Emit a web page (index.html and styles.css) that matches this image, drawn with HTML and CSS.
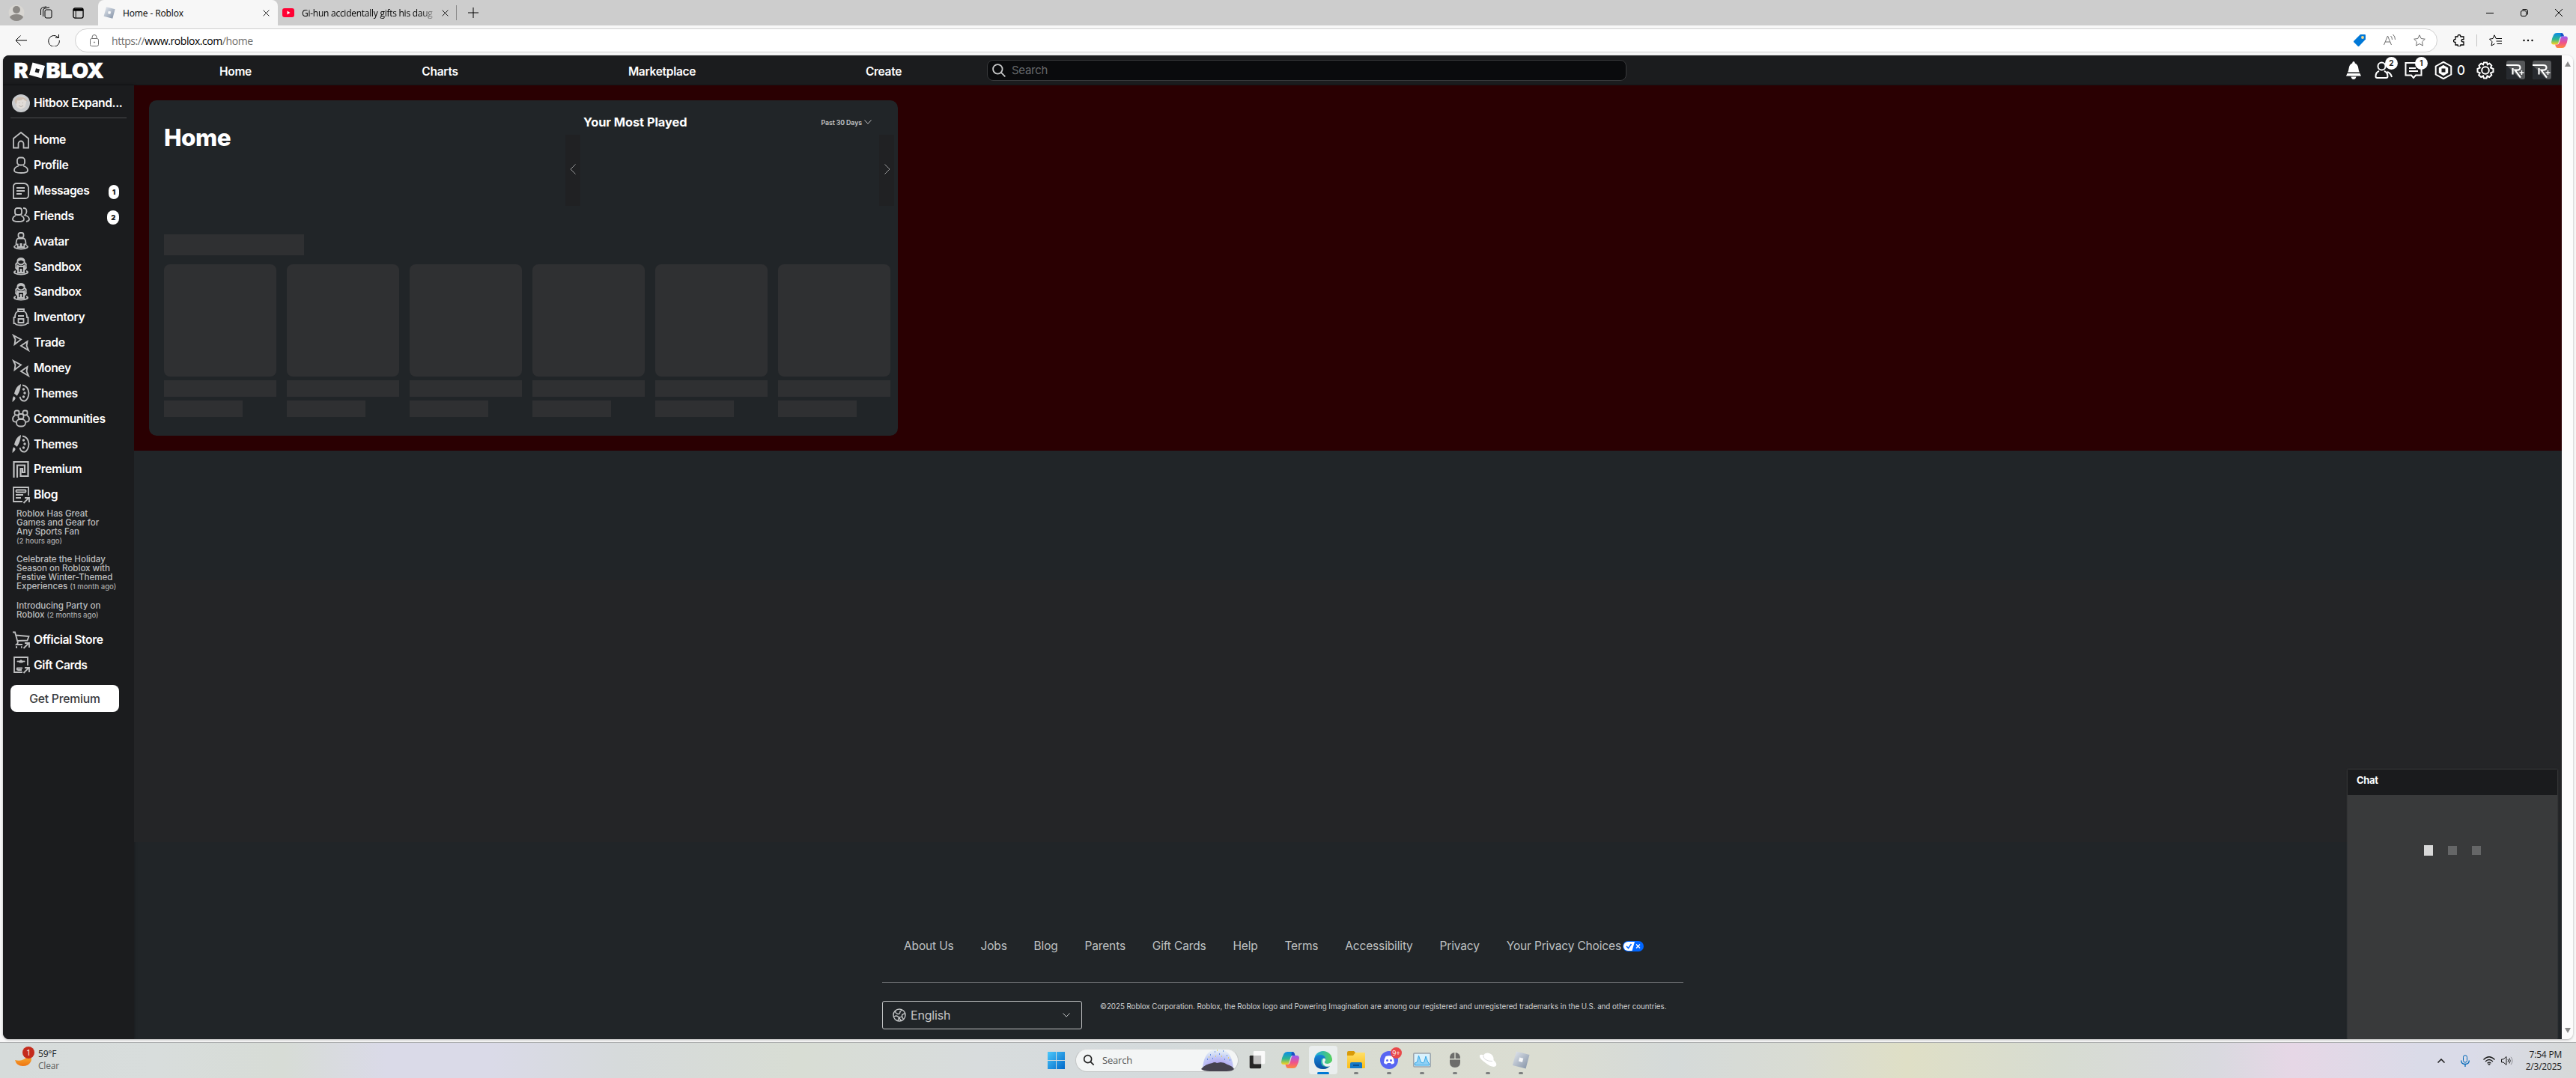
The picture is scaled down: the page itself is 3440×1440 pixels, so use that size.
FILE: index.html
```html
<!DOCTYPE html>
<html lang="en">
<head>
    <meta charset="UTF-8">
    <meta name="viewport" content="width=device-width, initial-scale=1.0">
    <title>Home - Roblox</title>
    <link rel="stylesheet" href="styles.css">
</head>
<body>
    <!-- Shared icons -->
    <svg width="0" height="0" class="defs">
        <defs>
            <linearGradient id="gSteel" x1="0" y1="0" x2="1" y2="1"><stop offset="0" stop-color="#e6eaf0"/><stop offset="1" stop-color="#7f8ea3"/></linearGradient>
            <linearGradient id="gWin" x1="0" y1="0" x2="1" y2="1"><stop offset="0" stop-color="#4cc8fb"/><stop offset="1" stop-color="#0068c9"/></linearGradient>
            <linearGradient id="gCopA" x1="0" y1="0" x2="0" y2="1"><stop offset="0" stop-color="#0a8be8"/><stop offset=".55" stop-color="#2fb78f"/><stop offset="1" stop-color="#ffd21c"/></linearGradient>
            <linearGradient id="gCopB" x1="0" y1="0" x2="0" y2="1"><stop offset="0" stop-color="#9a5df5"/><stop offset=".55" stop-color="#f0538a"/><stop offset="1" stop-color="#ff8a3c"/></linearGradient>
            <linearGradient id="gEdge" x1="0" y1="0" x2="1" y2="0"><stop offset="0" stop-color="#18a4e6"/><stop offset="1" stop-color="#58d35c"/></linearGradient>
            <linearGradient id="gEdge2" x1="0" y1="0" x2="0" y2="1"><stop offset="0" stop-color="#1684d8"/><stop offset="1" stop-color="#0c4fa0"/></linearGradient>
            <linearGradient id="gMoon" x1="0" y1="0" x2="0" y2="1"><stop offset="0" stop-color="#f8bb3c"/><stop offset="1" stop-color="#ef7512"/></linearGradient>
            <linearGradient id="gFolder" x1="0" y1="0" x2="0" y2="1"><stop offset="0" stop-color="#ffdf68"/><stop offset="1" stop-color="#fbbd17"/></linearGradient>
            <radialGradient id="gBurst" cx=".5" cy="1" r="1"><stop offset="0" stop-color="#a98df0"/><stop offset=".6" stop-color="#c3ccf6"/><stop offset="1" stop-color="#dfeef6" stop-opacity=".4"/></radialGradient>
        </defs>
        <symbol id="i-home" viewBox="0 0 24 24"><path d="M2 22.500V10L12 2l10 8v12.500h-6.500V17a3.500 3.500 0 0 0-7 0v5.500z"/></symbol>
        <symbol id="i-profile" viewBox="0 0 24 24"><rect x="7" y="1.500" width="10" height="10" rx="3.500"/><path d="M9 12.500c-3.500 1-6 3-6 6 0 2.500 3 3.500 9 3.500s9-1 9-3.500c0-3-2.500-5-6-6"/></symbol>
        <symbol id="i-messages" viewBox="0 0 24 24"><path d="M2 22V6a4 4 0 0 1 4-4h10a6 6 0 0 1 6 6v10a4 4 0 0 1-4 4zM6 8h11M6 12h11M6 16h7"/></symbol>
        <symbol id="i-friends" viewBox="0 0 24 24"><rect x="4" y="2" width="9" height="9" rx="3"/><path d="M5 12c-2.500 1-4 3-4 5 0 2 3 3 7.500 3s7.500-1 7.500-3-1.500-4-4-5M15 2c3.500 0 4.500 1 4.500 4.500S18 10.500 17 11.500c4 1 6 3 6 5.500 0 1.500-1.500 2.500-4 3"/></symbol>
        <symbol id="i-avatar" viewBox="0 0 24 24"><rect x="8.500" y="1" width="7" height="6.500" rx="2.500"/><path d="M8 8.500h8q2.500 1 2.500 8h-2.200V20H12.600v-4h-1.200v4H7.700v-3.500H5.500q0-7 2.500-8zM5 18c-5 2 0 4.500 7 4.500s12-2.500 7-4.500"/></symbol>
        <symbol id="i-sandbox" viewBox="0 0 24 24"><path d="M7.500 7q-1-6 4.500-6t4.500 6q-2 2.500-4.500 2.500T7.500 7zM8 4l4-1.500L16 4M7.500 7q-3 1-2 4l-.3 3 1.800 2 1-5M16.500 7q3 1 2 4l.3 3-1.800 2-1-5M8 11l1.500 1h5l1.500-1v9h-3.500v-4h-1v4H8zM5 18c-5 2 0 4.500 7 4.500s12-2.500 7-4.500" stroke-width="2"/></symbol>
        <symbol id="i-inventory" viewBox="0 0 24 24"><path d="M8 4V1h8v3M8 4h8q4 1 4 8h1.500v8H20q-1 2.500-8 2.500T4 20H2.500v-8H4q0-7 4-8zM8 10h8M8.500 14h7v5h-7z"/></symbol>
        <symbol id="i-trade" viewBox="0 0 24 24"><path d="M2 2l10 5.500L3.500 14l1-6.500zM22 22l-10-6 8.500-6-1 6z" stroke-width="1.900"/></symbol>
        <symbol id="i-themes" viewBox="0 0 24 24"><path d="M11 1.500q-1 8-4.500 13l-2.500-2Q6 4 11 1.500z" fill="currentColor"/><path d="M2.500 17.500q2 1 .5 3L1.500 22q0-3 1-4.500z" fill="currentColor"/><path d="M14 1.500q8 1.500 8.500 10.500-.5 8-5 10.500-5.500 1-7-5.500"/><circle cx="15.500" cy="7" r=".8"/><circle cx="17" cy="12" r=".8"/><circle cx="15.500" cy="17" r=".8"/></symbol>
        <symbol id="i-communities" viewBox="0 0 24 24"><rect x="3.500" y="1.500" width="6" height="6" rx="2"/><rect x="14.500" y="1.500" width="6" height="6" rx="2"/><rect x="8.500" y="6" width="7" height="6.500" rx="2.500"/><rect x="6" y="13" width="12" height="9.500" rx="4.500"/><path d="M4 8Q0 10 1.500 15q1.500 2 4 1.500M20 8q4 2 2.500 7-1.500 2-4 1.500"/></symbol>
        <symbol id="i-premium" viewBox="0 0 24 24"><path d="M2.500 23V2h19v19h-10V11h2.500v5h3V6.500H7V23" stroke-width="2.200"/></symbol>
        <symbol id="i-blog" viewBox="0 0 24 24"><path d="M14 21H2V2h20v11"/><rect x="5.500" y="5.500" width="13" height="3" rx="1"/><path d="M5 12h10M5 16h7M15.500 23l7-7M17 16h6v6"/></symbol>
        <symbol id="i-store" viewBox="0 0 24 24"><path d="M1 1.500h3L8 16M5 5.500l17.500 1.500-2 5.500L7 13M8 16l-2 2h8M15.500 23l7-7M17 16h6v6"/><path d="M5 21.500h2M12 21.500h1.500" stroke-width="2.500"/></symbol>
        <symbol id="i-gift" viewBox="0 0 24 24"><path d="M14 22H3V2h18v11M14 16.500H7q-1 2 1 2.500h5M15.500 23l7-7M17 16h6v6"/><path d="M7 7h3l2-1.500L14 7h3v1h-2l-1 1h-4L9 8H7z" fill="currentColor" stroke-width=".8"/></symbol>
        <symbol id="i-search" viewBox="0 0 24 24"><circle cx="10" cy="10" r="7.500"/><path d="M15.500 15.500L22 22"/></symbol>
        <symbol id="i-close" viewBox="0 0 10 10"><path d="M.7.700l8.600 8.600M9.300.700L.7 9.300"/></symbol>
        <symbol id="i-roblox" viewBox="0 0 24 24"><path d="M6 .5L23.500 5 18.500 23.500.800 19z" fill="url(#gSteel)"/><path d="M10.300 8.500l5 1.300-1.400 5.100-5-1.300z" fill="#fff" opacity=".9"/></symbol>
        <symbol id="i-copilot" viewBox="0 0 24 22"><path d="M8 0h7q2 0 2.500 2l1 3h-3q-2.500 0-3.300 3l-2 7q-.7 2-2.700 2H3q-3 0-3-3.500Q.5 8 3.500 2.500 5 0 8 0z" fill="url(#gCopA)"/><path d="M14 .2h1q2 0 2.500 1.800l1 3h-5z" fill="#1c4fc4"/><path d="M16 22H9q-2 0-2.500-2l-1-3h3q2.500 0 3.300-3l2-7q.700-2 2.700-2H21q3 0 3 3.500-.5 5.500-3.500 11Q19 22 16 22z" fill="url(#gCopB)"/></symbol>
        <symbol id="i-rplus" viewBox="0 0 25 25"><rect width="25" height="25" rx="3" fill="#555759"/><path d="M0 6l19 19H3q-3 0-3-3z" fill="#272a2f"/><path d="M0 6h14q4.500 0 4.500 3.300T14 12.700h-2.500l7.500 10M8.500 10v8.500" stroke="#fff" stroke-width="2.200" fill="none"/><path d="M20.500 13v6M17.500 16h6" stroke="#fff" stroke-width="1.400"/></symbol>
    </svg>

    <!-- Browser chrome -->
    <div class="tabstrip">
        <div class="tab-tools">
            <svg class="user" viewBox="0 0 22 22"><circle cx="11" cy="11" r="10.500" fill="#d8d6d2"/><circle cx="11" cy="7" r="5" fill="#8b8884"/><path d="M2 17q2-4 9-4t9 4q-3 5-9 5t-9-5z" fill="#8b8884"/></svg>
            <svg class="ws line" viewBox="0 0 18 18"><rect x="7" y="5" width="9" height="11" rx="2"/><path d="M4.500 14V6q0-2.500 2.500-3l6-1M1.500 12V5q0-2 2-2.700L9 .8"/></svg>
            <svg class="ta" viewBox="0 0 16 16"><rect x="1" y="1" width="14" height="14" rx="2.500" fill="none" stroke="#000" stroke-width="1.400"/><path d="M1 1.500h14v3.500H1z"/><path d="M4.500 4v11" stroke="#000"/></svg>
        </div>
        <div class="tab active">
            <svg class="fav"><use href="#i-roblox"/></svg>
            <span class="tab-title">Home - Roblox</span>
            <svg class="x line"><use href="#i-close"/></svg>
        </div>
        <div class="tab">
            <svg class="fav" viewBox="0 0 16 16"><rect y="2" width="16" height="12" rx="3" fill="#ff0033"/><path d="M6.500 5.500v5l4-2.500z" fill="#fff"/></svg>
            <span class="tab-title fade">Gi-hun accidentally gifts his daug</span>
            <svg class="x line"><use href="#i-close"/></svg>
        </div>
        <svg class="plus line" viewBox="0 0 14 14"><path d="M7 0v14M0 7h14"/></svg>
        <div class="win-btns">
            <svg class="line" viewBox="0 0 10 10"><path d="M0 5.500h10"/></svg>
            <svg class="line" viewBox="0 0 10 10"><rect x=".5" y="2.500" width="7" height="7" rx="1.500"/><path d="M2.500.500H7q2.500 0 2.500 2.500v4.500"/></svg>
            <svg class="line" viewBox="0 0 10 10"><path d="M0 0l10 10M10 0L0 10"/></svg>
        </div>
    </div>

    <div class="toolbar">
        <svg class="back line" viewBox="0 0 16 14"><path d="M16 7H1M7.500.500L1 7l6.500 6.500"/></svg>
        <svg class="reload line" viewBox="0 0 16 16"><path d="M13.500 4A7.300 7.300 0 1 0 15.300 8M14.500 0v4.500H10"/></svg>
        <div class="address">
            <svg class="lock line" viewBox="0 0 14 16"><rect x="1.500" y="5.500" width="11" height="10" rx="2"/><path d="M4 5.500V4q0-3.500 3-3.500t3 3.500v1.500"/><circle cx="7" cy="10.500" r=".6"/></svg>
            <span class="url">https://<b>www.roblox.com</b>/home</span>
            <svg class="tag" viewBox="0 0 16 16"><path d="M9 0h6q1 0 1 1v5.500L7.500 15.500q-1 1-2 0L.5 10.500q-1-1 0-2z" fill="#0078d7"/><circle cx="12" cy="4" r="1.900" fill="#f9d98c"/></svg>
            <svg class="aa line" viewBox="0 0 16 16"><path d="M.5 14L5.500 2l5 12M2.200 10h6.600M9.500 2q2 1.500 2 5M12.500 0q3 2.500 3 7"/></svg>
            <svg class="star line" viewBox="0 0 16 16"><path d="M8 .8l2.200 4.700 5.100.700-3.700 3.600.9 5.200L8 12.500 3.500 15l.9-5.200L.7 6.200l5.100-.7z"/></svg>
        </div>
        <svg class="ext line" viewBox="0 0 16 16"><path d="M3 3h3q0-2.500 2-2.500T10 3h4v3.500q-3 0-3 1.800t3 1.700V14h-4q0 2-2 2t-2-2H3v-3.500q-2.500 0-2.500-2T3 6.500z" stroke-width="1.300"/></svg>
        <i class="sep"></i>
        <svg class="favs line" viewBox="0 0 17 16"><path d="M11 5.700l-1.800-.2L7 .8 5 5.500l-4.500.700L4 9.800 3 15l4.500-2.500M11 5.500h6M9.500 9H17M10.500 12.500H17"/></svg>
        <svg class="dots" viewBox="0 0 14 4"><circle cx="1.500" cy="2" r="1.200"/><circle cx="7" cy="2" r="1.200"/><circle cx="12.500" cy="2" r="1.200"/></svg>
        <svg class="cop"><use href="#i-copilot"/></svg>
    </div>

    <!-- Page -->
    <div class="viewport">
        <div class="page">
            <header class="topbar">
                <svg class="logo" viewBox="0 0 118 22">
                    <text x="-1.500" y="20.500" textLength="19" lengthAdjust="spacingAndGlyphs">R</text>
                    <path d="M23.500.5L40 5 35.500 21.500 19 17z"/><path d="M28 8.200l5 1.300-1.300 5-5-1.300z" fill="#1b1c1e"/>
                    <text x="41.500" y="20.500" textLength="77" lengthAdjust="spacingAndGlyphs">BLOX</text>
                </svg>
                <nav class="topnav"><a>Home</a><a>Charts</a><a>Marketplace</a><a>Create</a></nav>
                <div class="search"><svg class="line"><use href="#i-search"/></svg>Search</div>
                <div class="top-icons">
                    <div class="ti"><svg viewBox="0 0 24 24"><path d="M12 0q1.800 0 1.800 2.500Q18 4 18.500 10q.3 3 1.500 4.500H4Q5.200 13 5.500 10 6 4 10.200 2.500 10.200 0 12 0zM3.500 16h17l1.500 3.500H2zM8.500 20.500h7q-1 3.500-3.500 3.500t-3.500-3.500z" fill="#fff"/></svg></div>
                    <div class="ti"><svg class="line" viewBox="0 0 24 24"><circle cx="9.500" cy="6.500" r="5"/><path d="M6 13q-4.500 1.500-4.500 7 0 2 2 2h12q2 0 2-2 0-5.500-4.500-7M17 14q5 2 6 7"/></svg><b class="bub">2</b></div>
                    <div class="ti"><svg class="line" viewBox="0 0 24 24"><path d="M15 2H1.500v16.500H9l3 3.500 3-3.500h7.500V9M6 9h9M6 13h12"/></svg><b class="bub">1</b></div>
                    <div class="ti"><svg class="line" viewBox="0 0 24 24"><path d="M12 .8l10.300 5.700v11L12 23.200 1.700 17.500v-11z"/><path d="M12 6l5.200 3v6L12 18l-5.200-3V9z" fill="#fff"/><path d="M9.500 9.500h5v5h-5z" fill="#1b1c1e" stroke="none"/></svg></div>
                    <span class="robux">0</span>
                    <div class="ti gear"><svg class="line" viewBox="0 0 24 24"><path d="M10 1.500h4l.8 2.700 2.700-1.500L20.300 5.500 19 8.500l3.500 1.500v4L19 15.500l1.300 2.700-3 2.800-2.800-1.500-1 3H10l-1-3-2.800 1.500-3-2.800L4.700 15.500 1.500 14v-4l3.200-1.500L3.500 5.500l2.800-2.800L9 4.200z"/><circle cx="12" cy="12" r="4.800"/></svg></div>
                    <svg class="rp"><use href="#i-rplus"/></svg>
                    <svg class="rp"><use href="#i-rplus"/></svg>
                </div>
            </header>

            <div class="body">
                <aside class="sidebar">
                    <div class="me">
                        <svg viewBox="0 0 24 24"><circle cx="12" cy="12" r="12" fill="#c9cbcd"/><path d="M5 11q0-8 7.500-8T19 11l-1.500 6-5.500 3-5.500-3z" fill="#e0dcd8"/><path d="M3.500 9Q5 3 12 3.500t8.500 6Q17 9 15 6q-3 3-8 2l-1 5q-2-1-2.500-4z" fill="#cdbfb2"/><path d="M9 15q3 3 6 0M9.500 11v1M14.500 11v1" stroke="#b4aca6" fill="none"/></svg>
                        <span>Hitbox Expand...</span>
                    </div>
                    <ul class="menu">
                        <li><svg><use href="#i-home"/></svg>Home</li>
                        <li><svg><use href="#i-profile"/></svg>Profile</li>
                        <li><svg><use href="#i-messages"/></svg>Messages<b class="count one">1</b></li>
                        <li><svg><use href="#i-friends"/></svg>Friends<b class="count">2</b></li>
                        <li><svg><use href="#i-avatar"/></svg>Avatar</li>
                        <li><svg><use href="#i-sandbox"/></svg>Sandbox</li>
                        <li><svg><use href="#i-sandbox"/></svg>Sandbox</li>
                        <li><svg><use href="#i-inventory"/></svg>Inventory</li>
                        <li><svg><use href="#i-trade"/></svg>Trade</li>
                        <li><svg><use href="#i-trade"/></svg>Money</li>
                        <li><svg><use href="#i-themes"/></svg>Themes</li>
                        <li><svg><use href="#i-communities"/></svg>Communities</li>
                        <li><svg><use href="#i-themes"/></svg>Themes</li>
                        <li><svg><use href="#i-premium"/></svg>Premium</li>
                        <li><svg><use href="#i-blog"/></svg>Blog</li>
                    </ul>
                    <div class="news">
                        <p>Roblox Has Great<br>Games and Gear for<br>Any Sports Fan<br><small>(2 hours ago)</small></p>
                        <p>Celebrate the Holiday<br>Season on Roblox with<br>Festive Winter-Themed<br>Experiences <small>(1 month ago)</small></p>
                        <p>Introducing Party on<br>Roblox <small>(2 months ago)</small></p>
                    </div>
                    <ul class="menu">
                        <li><svg><use href="#i-store"/></svg>Official Store</li>
                        <li><svg><use href="#i-gift"/></svg>Gift Cards</li>
                    </ul>
                    <button class="premium-btn">Get Premium</button>
                </aside>

                <main class="content">
                    <section class="banner">
                        <div class="card">
                            <div class="card-top">
                                <h1>Home</h1>
                                <div class="most">
                                    <div class="most-head">
                                        <h2>Your Most Played</h2>
                                        <span class="range">Past 30 Days <svg class="line" viewBox="0 0 10 6"><path d="M.5.500L5 5.200 9.500.500"/></svg></span>
                                    </div>
                                    <div class="arrows">
                                        <span><svg class="line" viewBox="0 0 8 14"><path d="M7.500.500L1 7l6.500 6.500"/></svg></span>
                                        <span class="next"><svg class="line" viewBox="0 0 8 14"><path d="M.5.500L7 7 .5 13.500"/></svg></span>
                                    </div>
                                </div>
                            </div>
                            <div class="shim title"></div>
                            <div class="tiles">
                                <div class="tile"><div class="shim pic"></div><div class="shim l1"></div><div class="shim l2"></div></div>
                                <div class="tile"><div class="shim pic"></div><div class="shim l1"></div><div class="shim l2"></div></div>
                                <div class="tile"><div class="shim pic"></div><div class="shim l1"></div><div class="shim l2"></div></div>
                                <div class="tile"><div class="shim pic"></div><div class="shim l1"></div><div class="shim l2"></div></div>
                                <div class="tile"><div class="shim pic"></div><div class="shim l1"></div><div class="shim l2"></div></div>
                                <div class="tile"><div class="shim pic"></div><div class="shim l1"></div><div class="shim l2"></div></div>
                            </div>
                        </div>
                    </section>
                    <div class="filler"></div>
                    <footer class="footer">
                        <div class="links">
                            <a>About Us</a><a>Jobs</a><a>Blog</a><a>Parents</a><a>Gift Cards</a><a>Help</a><a>Terms</a><a>Accessibility</a><a>Privacy</a>
                            <a>Your Privacy Choices<svg viewBox="0 0 28 14"><rect width="28" height="14" rx="7" fill="#0066ff"/><path d="M7 1h9l-3.500 12H7A6 6 0 0 1 7 1z" fill="#fff"/><path d="M5 7l2.500 2.500L11.500 4" stroke="#0066ff" stroke-width="1.500" fill="none"/><path d="M18 4.500l5 5M23 4.500l-5 5" stroke="#fff" stroke-width="1.400"/></svg></a>
                        </div>
                        <div class="legal">
                            <div class="lang">
                                <svg class="line globe" viewBox="0 0 18 18"><circle cx="9" cy="9" r="8"/><path d="M3.500 3.500Q4 7 7 7.500T10 4l3-2M16.500 7q-4 .5-4 3t2 4M2 11q3-2 5 0t5 0M7 16.500l1.500-4 3 4"/></svg>
                                English
                                <svg class="line chev" viewBox="0 0 10 6"><path d="M.5.500L5 5.200 9.500.500"/></svg>
                            </div>
                            <p>©2025 Roblox Corporation. Roblox, the Roblox logo and Powering Imagination are among our registered and unregistered trademarks in the U.S. and other countries.</p>
                        </div>
                    </footer>
                </main>
            </div>

            <div class="chat">
                <div class="chat-head">Chat</div>
                <div class="loader"><i class="on"></i><i></i><i></i></div>
            </div>
        </div>
        <div class="scrollbar"><i class="up"></i><i class="down"></i></div>
    </div>

    <!-- Taskbar -->
    <div class="taskbar">
        <div class="weather">
            <svg viewBox="0 0 26 28"><path d="M0 18q7 2 12-1 5-3 6-8 6 6 3 11.500T10.500 26Q2 26 0 18z" fill="url(#gMoon)"/><circle cx="18" cy="8" r="8" fill="#c42b1c"/><text x="18" y="12">1</text></svg>
            <div>59°F<br><span>Clear</span></div>
        </div>
        <div class="apps">
            <svg class="start" viewBox="0 0 23 23"><path d="M0 0h11v11H0zM12 0h11v11H12zM0 12h11v11H0zM12 12h11v11H12z" fill="url(#gWin)"/></svg>
            <div class="tb-search">
                <svg class="line mag"><use href="#i-search"/></svg>
                <span>Search</span>
                <svg class="burst" viewBox="0 0 45 30"><path d="M2 25Q4 1 23 0q18 1 20 25z" fill="url(#gBurst)"/><path d="M0 27q6-7 15-8 3-2 6 0l5-1q5 0 9 3 7 2 9 6-2 3-10 3H12q-9 0-12-3z" fill="#46424f"/><path d="M8 14h1M12 8h1M18 4h1M24 7h1M29 3h1M34 9h1M38 15h1M15 13h1M31 14h1" stroke="#4a7bd8" stroke-width="1.500"/><path d="M10 11h1M21 2h1M27 10h1M36 12h1M19 10h1" stroke="#e8cf4a" stroke-width="1.500"/></svg>
            </div>
            <div class="app"><svg viewBox="0 0 24 28"><rect x="0" y="7" width="18" height="20" rx="1.500" fill="#262626"/><rect x="6" y="0" width="18" height="20" rx="1.500" fill="#fafafa"/><rect x="6" y="7" width="12" height="13" fill="#c2c2c2"/></svg></div>
            <div class="app"><svg viewBox="0 0 24 24"><use href="#i-copilot"/></svg></div>
            <div class="app current"><svg viewBox="0 0 24 24"><circle cx="12" cy="12" r="12" fill="url(#gEdge)"/><path d="M0 12q1-7 8-7 6 0 7 5-5-2-6 3-1 7 7 8 3 0 6-2-4 5-10 5Q0 24 0 12z" fill="url(#gEdge2)"/><path d="M12 10q2-1 3 1 .5 2-1 3-1 3 4 3 4-.5 6-4v6l-1 1q-10 3-12-5-.500-3 1-5z" fill="#eef1f1"/></svg><i></i></div>
            <div class="app"><svg viewBox="0 0 24 24"><path d="M0 2q0-2 2-2h7l3 3-3 3H0z" fill="#d99a08"/><path d="M0 6h8l3-4h12q1 0 1 1v19q0 1-1 1H1q-1 0-1-1z" fill="url(#gFolder)"/><path d="M4 23v-6q0-2 2-2h12q2 0 2 2v6z" fill="#1478c8"/><path d="M8 19h8" stroke="#0b4f8c" stroke-width="2"/></svg><i></i></div>
            <div class="app"><svg viewBox="0 0 24 24"><circle cx="12" cy="12" r="12" fill="#5865f2"/><path d="M7.500 7q4.500-1.500 9 0 2.500 4 2.500 9-2 1.500-4 1.500l-1-1.500h-4l-1 1.500q-2 0-4-1.500 0-5 2.500-9z" fill="#fff"/><circle cx="9.500" cy="12.500" r="1.500" fill="#5865f2"/><circle cx="14.500" cy="12.500" r="1.500" fill="#5865f2"/></svg><b>9+</b><i></i></div>
            <div class="app"><svg viewBox="0 0 24 24"><rect x=".8" y="3" width="22.400" height="18" rx="1" fill="#d9f1fc" stroke="#9aa3aa" stroke-width="1.500"/><path d="M2.500 19v-3l3-1.500L7.500 6l3 9 3 1 1.500-2L17 7l2.500 7 2 3v2z" fill="#8fd0f4" stroke="#35a7e8"/></svg><i></i></div>
            <div class="app"><svg class="mouse" viewBox="0 0 14 20"><path d="M0 8Q0 .5 6.300 0v8zM14 8Q14 .5 7.700 0v8zM0 9.500h14V13q0 7-7 7t-7-7z" fill="#6d6d6b"/></svg><i></i></div>
            <div class="app"><svg viewBox="0 0 24 24"><path d="M1 6q1-2 5-.5Q9 1 15 3.500q5 2.500 4.500 8.500Q25 17 22.500 20 18 23 9 16 0 10 1 6z" fill="#fff"/><path d="M6 6q-1 3 3 5.500t9 2" stroke="#d8dada" fill="none"/></svg><i></i></div>
            <div class="app"><svg><use href="#i-roblox"/></svg><i></i></div>
        </div>
        <div class="tray">
            <svg class="line t1" viewBox="0 0 10 6"><path d="M.5 5.500L5 1l4.500 4.500" stroke-width="1.500"/></svg>
            <svg class="line t2" viewBox="0 0 12 16"><rect x="3.500" y=".7" width="5" height="9.500" rx="2.500"/><path d="M.7 7.500q0 5 5.300 5t5.300-5M6 12.500V16" stroke-width="1.300"/></svg>
            <svg class="line t3" viewBox="0 0 16 12"><path d="M.5 4.500q7.500-7.500 15 0M3 7q5-5 10 0M5.500 9.300q2.500-2.500 5 0" stroke-width="1.200"/><circle cx="8" cy="10.800" r="1"/></svg>
            <svg class="line t4" viewBox="0 0 16 12"><path d="M.5 4H3l4-3.500v11L3 8H.5zM9 4q1.500 2 0 4M11 2.500q2.500 3.500 0 7"/><path d="M13 .8q4 5.200 0 10.400" opacity=".4"/></svg>
            <div class="clock">7:54 PM<br>2/3/2025</div>
        </div>
    </div>
</body>
</html>
```
FILE: styles.css
```css
:root {
    --ui: "Open Sans", "Noto Sans", sans-serif;
    --rbx: Inter, "Noto Sans", sans-serif;
    --panel: #1b1c1e;
    --page: #212528;
}

* {
    box-sizing: border-box;
}

body {
    margin: 0;
    height: 1440px;
    display: flex;
    flex-direction: column;
    background: #f7f7f7;
    font-family: var(--ui);
    overflow: hidden;
}

svg {
    flex: none;
    display: block;
}

.defs {
    position: absolute;
}

.line {
    fill: none;
    stroke: currentColor;
}

/* Tab strip */
.tabstrip {
    height: 34px;
    background: #cdcdcd;
    display: flex;
    align-items: center;
    font-size: 12px;
}

.tab-tools {
    width: 131px;
    padding-left: 11px;
    display: flex;
    align-items: center;
}

.user { width: 22px; height: 22px; }
.ws { width: 18px; height: 18px; margin-left: 20px; }
.ta { width: 15px; height: 15px; margin-left: 26px; }

.tab {
    height: 34px;
    width: 239px;
    padding: 0 10px 0 6px;
    display: flex;
    align-items: center;
}

.tab.active {
    background: #f7f7f7;
    border-radius: 8px 8px 0 0;
    width: 240px;
    padding: 0 11px 0 7px;
}

.tab .fav { width: 16px; height: 16px; }

.tab-title {
    flex: 1;
    margin: 0 6px 0 10px;
    white-space: nowrap;
    letter-spacing: -0.12px;
}

.fade {
    letter-spacing: -0.26px;
    -webkit-mask-image: linear-gradient(90deg, #000 88%, transparent 100%);
    mask-image: linear-gradient(90deg, #000 88%, transparent 100%);
}

.tab .x { width: 9px; height: 9px; }

.tab:not(.active) { border-right: 1px solid #8a8a8a; height: 20px; }

.plus { width: 14px; height: 14px; margin-left: 15px; }

.win-btns {
    margin-left: auto;
    padding-right: 18px;
    display: flex;
    gap: 36px;
}

.win-btns svg { width: 10px; height: 10px; overflow: visible; }

/* Toolbar */
.toolbar {
    height: 40px;
    display: flex;
    align-items: center;
    padding-left: 20px;
}

.back { width: 16px; height: 14px; }
.reload { width: 16px; height: 16px; margin: 0 20px 0 28px; }

.address {
    width: 3155px;
    height: 32px;
    border: 1px solid #cfcfcf;
    border-radius: 16px;
    background: #fff;
    display: flex;
    align-items: center;
    padding: 0 15px 0 18px;
    color: #6e6e6e;
}

.lock { width: 14px; height: 16px; margin-right: 16px; }

.url {
    flex: 1;
    font-size: 14px;
    letter-spacing: -0.45px;
}

.url b {
    font-weight: 400;
    color: #000;
}

.tag, .aa, .star { width: 16px; height: 16px; }
.aa, .star { margin-left: 24px; }
.ext { width: 16px; height: 16px; margin-left: 21px; }
.sep { width: 1px; height: 16px; background: #c4c4c4; margin: 0 16px 0 15px; }
.favs { width: 17px; height: 16px; }
.dots { width: 14px; height: 4px; margin: 0 24px 0 28px; }
.cop { width: 22px; height: 20px; }

/* Viewport */
.viewport {
    height: 1314px;
    margin: 0 4px;
    border-radius: 8px;
    overflow: hidden;
    display: flex;
    box-shadow: 0 1px 3px rgba(0, 0, 0, 0.3);
    font-family: var(--rbx);
    color: #fff;
}

.page {
    width: 3417px;
    position: relative;
    background: var(--page);
}

.scrollbar {
    flex: 1;
    background: #fcfcfc;
    display: flex;
    flex-direction: column;
    justify-content: space-between;
    align-items: center;
    padding: 8px 0;
}

.scrollbar i {
    border: 4.5px solid transparent;
}

.scrollbar .up { border-bottom: 7px solid #8a8a8a; border-top: 0; }
.scrollbar .down { border-top: 7px solid #8a8a8a; border-bottom: 0; }

/* Roblox top bar */
.topbar {
    height: 40px;
    background: var(--panel);
    border-bottom: 1px solid #141416;
    display: flex;
    align-items: center;
    padding: 0 14px 0 16px;
}

.logo { width: 118px; height: 22px; fill: #fff; overflow: visible; }
.logo text { font: 900 26.5px Inter, sans-serif; stroke: #fff; stroke-width: 0.5px; }

.topnav {
    margin-left: 36px;
    display: flex;
    font-size: 15.5px;
    font-weight: 600;
    letter-spacing: -0.3px;
    padding-top: 3px;
}

.topnav a { text-align: center; width: 264px; }
.topnav a:nth-child(1) { width: 281px; }
.topnav a:nth-child(2) { width: 265px; }
.topnav a:nth-child(3) { width: 328px; }

.search {
    margin-left: 6px;
    width: 854px;
    height: 28px;
    border: 1px solid #38393b;
    border-radius: 8px;
    background: #0a0b0d;
    color: #66686a;
    font-size: 15px;
    letter-spacing: -0.3px;
    display: flex;
    align-items: center;
    padding-left: 5px;
}

.search svg { width: 20px; height: 20px; margin-right: 7px; color: #c5c6c7; stroke-width: 2.2; }

.top-icons {
    margin-left: auto;
    display: flex;
    align-items: center;
}

.ti {
    position: relative;
    margin-right: 16px;
}

.ti svg { width: 24px; height: 24px; stroke-width: 2; }

.bub {
    position: absolute;
    left: 14px;
    top: -6px;
    width: 17px;
    height: 17px;
    border-radius: 50%;
    background: #fff;
    color: #222;
    font-size: 10px;
    line-height: 17px;
    text-align: center;
}

.robux { margin: 0 15px 0 -10px; font-size: 17px; font-weight: 500; }
.rp { width: 25px; height: 25px; margin-right: 10px; }
.rp:last-child { margin-right: 0; }

.body {
    display: flex;
    height: 1274px;
}

/* Sidebar */
.sidebar {
    width: 175px;
    background: var(--panel);
    padding: 12px 10px 0;
    box-shadow: 0 0 4px rgba(0, 0, 0, 0.35);
    font-size: 15.7px;
    font-weight: 600;
    letter-spacing: -0.42px;
}

.me {
    display: flex;
    gap: 5px;
    align-items: center;
    height: 32px;
    padding: 0 0 8px 2px;
    border-bottom: 1px solid #4b4c4e;
    white-space: nowrap;
}

.me svg { width: 24px; height: 24px; }

.menu {
    list-style: none;
    margin: 0;
    padding: 0;
}

.me + .menu { padding-top: 12px; }

.menu li {
    height: 33.85px;
    display: flex;
    align-items: center;
    gap: 5px;
    padding: 0 10px 0 2px;
}

.menu svg {
    width: 24px;
    height: 24px;
    color: #bfc0c1;
    fill: none;
    stroke: currentColor;
    stroke-width: 1.8;
}

.count {
    margin-left: auto;
    min-width: 16px;
    height: 19px;
    border-radius: 9px;
    background: #fff;
    color: #1b1c1e;
    font-size: 9.5px;
    line-height: 19px;
    text-align: center;
    position: relative;
    top: 2px;
}

.count.one { min-width: 14px; }

.news {
    padding: 2px 0 0 8px;
    font-size: 11.6px;
    line-height: 12px;
    font-weight: 500;
    color: #bdbebe;
    letter-spacing: -0.03px;
    white-space: nowrap;
    height: 160px;
}

.news p { margin: 0 0 12.5px; }
.news small { font-size: 9.6px; color: #a5a6a7; }

.premium-btn {
    width: 145px;
    height: 36px;
    margin-top: 10px;
    border: 0;
    border-radius: 8px;
    background: #fff;
    color: #393b3d;
    font: 500 15.7px var(--rbx);
    letter-spacing: -0.2px;
}

/* Main content */
.content {
    flex: 1;
    display: flex;
    flex-direction: column;
}

.banner {
    height: 488px;
    background: #2a0002;
    padding: 20px;
}

.card {
    width: 1000px;
    height: 448px;
    border-radius: 10px;
    background: var(--page);
    padding: 20px 5px 0 20px;
}

.card-top {
    display: flex;
    justify-content: space-between;
    height: 159px;
}

.card h1 {
    margin: 10px 0 0;
    font-size: 31.5px;
    line-height: 40px;
    font-weight: 800;
    letter-spacing: -0.5px;
}

.most { width: 439px; }

.most-head {
    display: flex;
    justify-content: space-between;
    align-items: center;
    height: 26px;
    padding: 0 30px 0 24px;
    margin-top: -4px;
}

.most h2 {
    margin: 0;
    font-size: 16.4px;
    font-weight: 700;
    letter-spacing: -0.05px;
}

.range {
    display: flex;
    align-items: center;
    gap: 3px;
    font-size: 8.8px;
    font-weight: 600;
    letter-spacing: -0.1px;
    color: #c5c6c7;
}

.range svg { width: 10px; height: 6px; }

.arrows {
    display: flex;
    justify-content: space-between;
    margin-top: 4px;
}

.arrows span {
    width: 20px;
    height: 95px;
    padding-bottom: 3px;
    background: #202123;
    display: flex;
    align-items: center;
    justify-content: center;
    color: #9b9c9d;
}

.arrows .next { padding-left: 2px; }
.arrows svg { width: 8px; height: 14px; }

.shim { background: #2f3032; }
.shim.title { width: 187px; height: 28px; }

.tiles {
    display: flex;
    gap: 14px;
    margin-top: 12px;
}

.tile { width: 150px; }
.pic { height: 150px; border-radius: 8px; }
.l1, .l2 { height: 22px; margin-top: 5px; }
.l2 { width: 105px; }

.filler {
    height: 523px;
    background: linear-gradient(var(--page) 173px, #242527 173px);
}

/* Footer */
.footer {
    margin-left: 999px;
    width: 1070px;
    padding-top: 125px;
}

.links {
    display: flex;
    justify-content: space-between;
    padding: 0 53px 0 29px;
    height: 63px;
    border-bottom: 1px solid #64676a;
    line-height: 28px;
    font-size: 15.5px;
    letter-spacing: -0.15px;
    color: #bfc1c2;
    white-space: nowrap;
}

.links a { display: flex; align-items: center; gap: 2px; height: 28px; }
.links svg { width: 28px; height: 14px; }

.legal {
    display: flex;
    gap: 24px;
    padding-top: 24px;
}

.lang {
    width: 267px;
    height: 38px;
    border: 1px solid #bfc1c2;
    border-radius: 3px;
    display: flex;
    align-items: center;
    gap: 6px;
    padding: 0 15px 0 13px;
    color: #c5c7c8;
    font-size: 16px;
    letter-spacing: -0.2px;
}

.globe { width: 18px; height: 18px; stroke-width: 1.4; }
.chev { width: 10px; height: 6px; margin-left: auto; }

.legal p {
    margin: 2px 0 0;
    font-size: 9.8px;
    line-height: 12px;
    letter-spacing: -0.05px;
    color: #d0d1d2;
    white-space: nowrap;
}

/* Chat floats over the page bottom */
.chat {
    position: absolute;
    right: 6px;
    bottom: 0;
    width: 280px;
    height: 360px;
    background: #393a3b;
    box-shadow: 0 0 2px #555;
}

.chat-head {
    height: 34px;
    background: #1a1b1d;
    font-size: 13px;
    font-weight: 700;
    line-height: 29px;
    padding-left: 12px;
    letter-spacing: -0.3px;
}

.loader {
    display: flex;
    justify-content: center;
    align-items: center;
    gap: 20px;
    margin-top: 67px;
    height: 14px;
}

.loader i { width: 12px; height: 12px; background: #656667; }
.loader .on { height: 14px; background: #d8d8d8; }

/* Taskbar */
.taskbar {
    margin-top: 4px;
    height: 48px;
    border-top: 1px solid #a9abac;
    background: linear-gradient(90deg, #d6dbda 0%, #d8dddc 6%, #d7dcd6 11%, #dadae8 15%, #dadae8 19%, #d6dadb 24%, #d8ddd4 31%, #d8dcdd 38%, #d4dadc 45%, #d9dcd1 54%, #dbddd2 60%, #d5dad9 65%, #d9dcd3 70%, #dfdfc6 74%, #d7dcd2 80%, #d9d9df 86%, #e6d7e6 89%, #dadbe8 94%, #dadbe8 96%, #d6d9d8 100%);
    display: flex;
    align-items: center;
    font-size: 12px;
    line-height: 16px;
    color: #1b1b1b;
}

.weather {
    display: flex;
    gap: 5px;
    padding-left: 20px;
    width: 1399px;
    height: 38px;
    letter-spacing: -0.2px;
}

.weather svg { width: 26px; height: 28px; }
.weather svg text { fill: #fff; font-size: 11px; text-anchor: middle; }
.weather div { margin-top: 2px; }
.weather span { color: #5c5f60; }

.apps {
    display: flex;
    align-items: center;
    height: 46px;
    padding-bottom: 1px;
}

.start { width: 23px; height: 23px; margin-right: 14px; }

.tb-search {
    width: 218px;
    height: 31px;
    border-radius: 16px;
    background: #f3f5f5;
    border: 1px solid #c3c6c6;
    border-top-color: #d8dada;
    display: flex;
    align-items: center;
    padding: 0 4px 0 9px;
    font-size: 13px;
    letter-spacing: -0.2px;
    color: #555;
    margin-right: 3px;
}

.mag { width: 16px; height: 16px; stroke-width: 2.5; color: #222; margin-right: 10px; }
.burst { width: 45px; height: 30px; margin-left: auto; }

.app {
    width: 38px;
    height: 38px;
    margin: 0 3px;
    border-radius: 4px;
    display: flex;
    align-items: center;
    justify-content: center;
    position: relative;
}

.app svg { width: 24px; height: 24px; }
.app .mouse { width: 14px; height: 20px; }
.app.current { background: #eaeeee; }

.app i {
    position: absolute;
    bottom: 0;
    left: 16px;
    width: 6px;
    height: 3px;
    border-radius: 2px;
    background: #7d7f7f;
}

.app.current i { left: 11px; width: 16px; background: #0078d4; }

.app b {
    position: absolute;
    left: 21px;
    top: 2px;
    width: 15px;
    height: 15px;
    border-radius: 50%;
    background: #e8484a;
    color: #fff;
    font-size: 9px;
    font-weight: 400;
    line-height: 15px;
    text-align: center;
}

.tray {
    margin-left: auto;
    display: flex;
    align-items: center;
    padding-right: 19px;
}

.t1 { width: 10px; height: 6px; margin-right: 21px; }
.t2 { width: 12px; height: 16px; margin-right: 18px; color: #0067b8; }
.t3 { width: 16px; height: 12px; margin-right: 8px; }
.t4 { width: 16px; height: 12px; }

.clock {
    width: 65px;
    text-align: right;
    letter-spacing: -0.2px;
}
```
